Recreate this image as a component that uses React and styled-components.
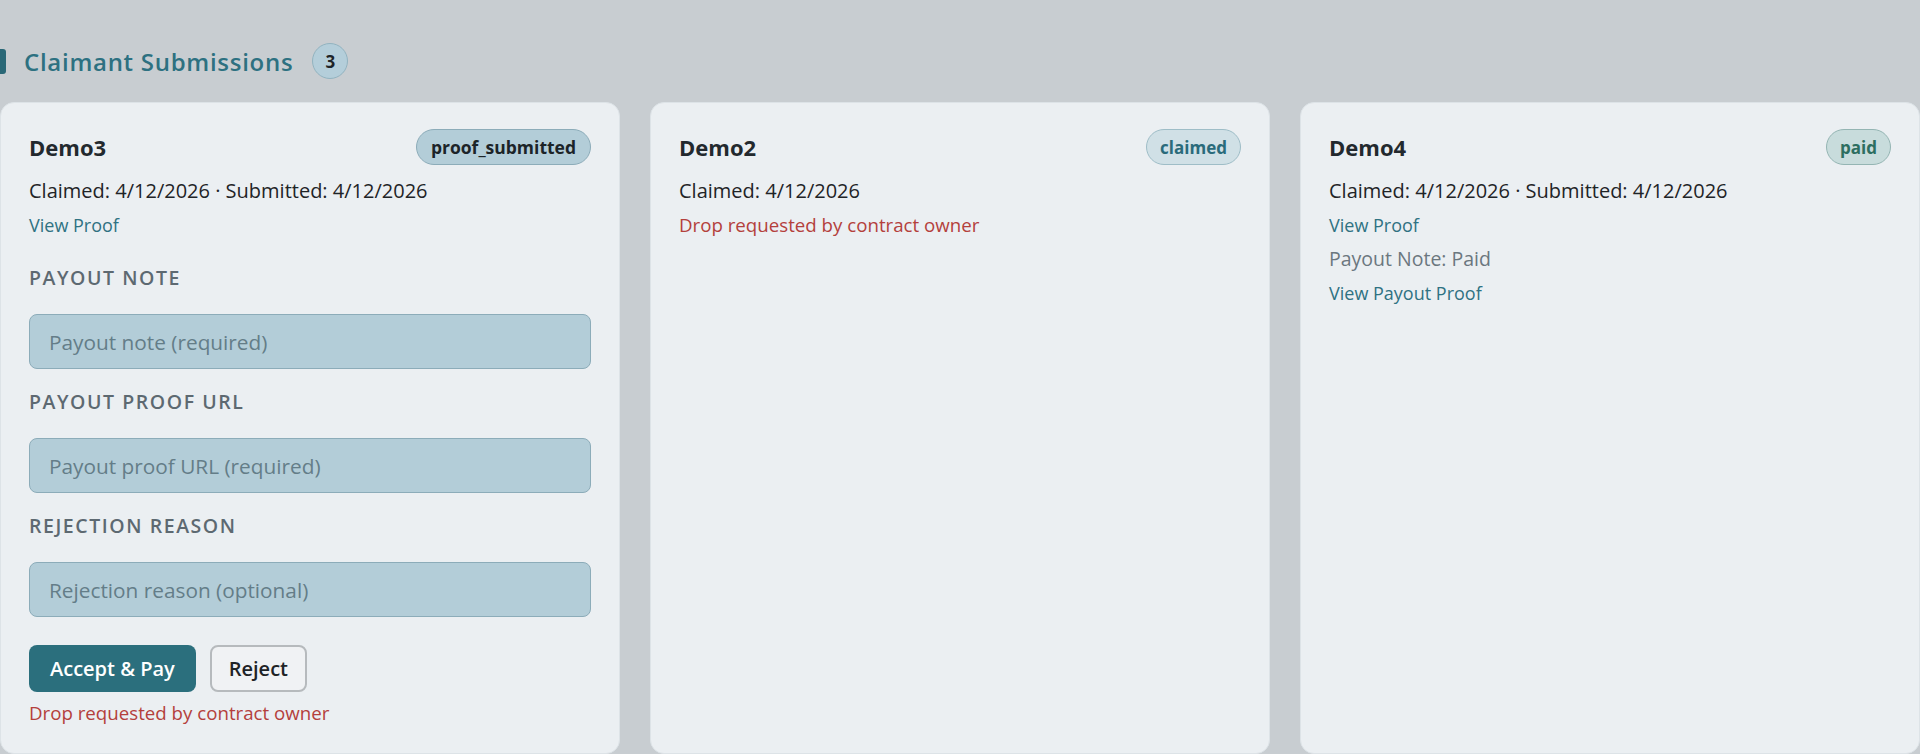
import styled, { createGlobalStyle } from "styled-components";

const GlobalStyle = createGlobalStyle`
    html, body {
        margin: 0;
        padding: 0;
        background-color: #c8cdd1;
        font-family: "Open Sans", "Noto Sans", Arial, sans-serif;
    }
    * {
        box-sizing: border-box;
    }
`;

const Page = styled.main`
    padding-top: 43px;
    width: 1920px;
`;

const SectionHeader = styled.header`
    display: flex;
    flex-direction: row;
    align-items: center;
    height: 36px;
    margin-bottom: 23px;
`;

const AccentBar = styled.span`
    width: 6px;
    height: 25px;
    background-color: #2a6877;
    border-radius: 0 3px 3px 0;
    margin-right: 18px;
`;

const SectionTitle = styled.h2`
    margin: 0;
    font-size: 24px;
    font-weight: 600;
    letter-spacing: 0.03em;
    color: #2d7181;
`;

const CountBadge = styled.span`
    display: flex;
    align-items: center;
    justify-content: center;
    width: 36px;
    height: 36px;
    margin-left: 19px;
    border-radius: 50%;
    background-color: #b4ceda;
    border: 1.5px solid #92b3c0;
    color: #1d2428;
    font-size: 17px;
    font-weight: 700;
`;

const Grid = styled.section`
    display: grid;
    grid-template-columns: repeat(3, 620px);
    gap: 30px;
    align-items: stretch;
`;

const Card = styled.article`
    display: flex;
    flex-direction: column;
    background-color: #ebeff2;
    border: 1px solid #dde3e7;
    border-radius: 14px;
    padding: 26px 28px 27px 28px;
`;

const CardHead = styled.div`
    display: flex;
    flex-direction: row;
    justify-content: space-between;
    align-items: center;
    height: 36px;
`;

const CardTitle = styled.h3`
    margin: 0;
    font-size: 22px;
    line-height: 1.3;
    font-weight: 700;
    color: #23292e;
`;

const STATUS = {
    proof_submitted: { bg: "#b3cdd8", border: "#8cacb9", color: "#1c2428" },
    claimed: { bg: "#d0e0e6", border: "#9ebdc7", color: "#2a6b7b" },
    paid: { bg: "#c8dcdc", border: "#94b5b3", color: "#2d6e60" },
};

const StatusBadge = styled.span`
    display: inline-flex;
    align-items: center;
    height: 36px;
    padding: 0 ${({ $status }) => ($status === "proof_submitted" ? "14px" : "13px")};
    border-radius: 18px;
    font-size: ${({ $status }) => ($status === "proof_submitted" ? "17.5px" : "17px")};
    font-weight: 700;
    background-color: ${({ $status }) => STATUS[$status].bg};
    border: 1px solid ${({ $status }) => STATUS[$status].border};
    color: ${({ $status }) => STATUS[$status].color};
`;

const Meta = styled.div`
    display: flex;
    flex-direction: column;
    gap: 4px;
    margin-top: 11px;
`;

const MetaLine = styled.div`
    font-size: ${({ $size }) => $size || "18px"};
    line-height: 30px;
    color: ${({ $tone }) =>
        $tone === "link" ? "#2f7282" :
        $tone === "muted" ? "#6b777f" :
        $tone === "danger" ? "#b4403c" : "#1f2427"};
    cursor: ${({ $tone }) => ($tone === "link" ? "pointer" : "default")};
`;

const Form = styled.div`
    display: flex;
    flex-direction: column;
    gap: 20px;
    margin-top: 25px;
`;

const Field = styled.label`
    display: flex;
    flex-direction: column;
    gap: 23px;
`;

const FieldLabel = styled.span`
    font-size: 19.5px;
    line-height: 26px;
    font-weight: 600;
    letter-spacing: 0.08em;
    text-transform: uppercase;
    color: #5d6971;
`;

const Input = styled.input`
    height: 55px;
    width: 100%;
    padding: 0 19px;
    border-radius: 8px;
    border: 1.5px solid #8cacb9;
    background-color: #b3cdd8;
    font-family: inherit;
    font-size: 20.8px;
    color: #1f2427;
    outline: none;
    &::placeholder {
        color: #647d88;
    }
`;

const Actions = styled.div`
    display: flex;
    flex-direction: row;
    gap: 14px;
    margin-top: 28px;
`;

const Button = styled.button`
    height: 47px;
    padding: ${({ $primary }) => ($primary ? "0 21px" : "0 17px")};
    border-radius: 8px;
    font-family: inherit;
    font-size: 20px;
    font-weight: 600;
    cursor: pointer;
    background-color: ${({ $primary }) => ($primary ? "#2b6f7d" : "#f0f2f4")};
    color: ${({ $primary }) => ($primary ? "#ffffff" : "#1e2326")};
    border: ${({ $primary }) => ($primary ? "none" : "2px solid #b6babd")};
`;

const Notice = styled.div`
    margin-top: 8px;
    font-size: 18.7px;
    line-height: 26px;
    color: #b4403c;
`;

function SubmissionCard({ sub }) {
    return (
        <Card>
            <CardHead>
                <CardTitle>{sub.name}</CardTitle>
                <StatusBadge $status={sub.status}>{sub.status}</StatusBadge>
            </CardHead>
            <Meta>
                <MetaLine $size="20px">
                    Claimed: {sub.claimed}
                    {sub.submitted && <> · Submitted: {sub.submitted}</>}
                </MetaLine>
                {sub.proof && <MetaLine $tone="link">View Proof</MetaLine>}
                {sub.payoutNote && <MetaLine $tone="muted" $size="19.5px">Payout Note: {sub.payoutNote}</MetaLine>}
                {sub.payoutProof && <MetaLine $tone="link">View Payout Proof</MetaLine>}
                {sub.dropRequested && !sub.review && (
                    <MetaLine $tone="danger" $size="18.7px">Drop requested by contract owner</MetaLine>
                )}
            </Meta>
            {sub.review && (
                <>
                    <Form>
                        <Field>
                            <FieldLabel>Payout Note</FieldLabel>
                            <Input placeholder="Payout note (required)" />
                        </Field>
                        <Field>
                            <FieldLabel>Payout Proof URL</FieldLabel>
                            <Input placeholder="Payout proof URL (required)" />
                        </Field>
                        <Field>
                            <FieldLabel>Rejection Reason</FieldLabel>
                            <Input placeholder="Rejection reason (optional)" />
                        </Field>
                    </Form>
                    <Actions>
                        <Button $primary>Accept &amp; Pay</Button>
                        <Button>Reject</Button>
                    </Actions>
                    {sub.dropRequested && <Notice>Drop requested by contract owner</Notice>}
                </>
            )}
        </Card>
    );
}

const submissions = [
    { name: "Demo3", status: "proof_submitted", claimed: "4/12/2026", submitted: "4/12/2026", proof: true, review: true, dropRequested: true },
    { name: "Demo2", status: "claimed", claimed: "4/12/2026", dropRequested: true },
    { name: "Demo4", status: "paid", claimed: "4/12/2026", submitted: "4/12/2026", proof: true, payoutNote: "Paid", payoutProof: true },
];

export default function App() {
    return (
        <>
            <GlobalStyle />
            <Page>
                <SectionHeader>
                    <AccentBar />
                    <SectionTitle>Claimant Submissions</SectionTitle>
                    <CountBadge>{submissions.length}</CountBadge>
                </SectionHeader>
                <Grid>
                    {submissions.map((s) => (
                        <SubmissionCard key={s.name} sub={s} />
                    ))}
                </Grid>
            </Page>
        </>
    );
}
